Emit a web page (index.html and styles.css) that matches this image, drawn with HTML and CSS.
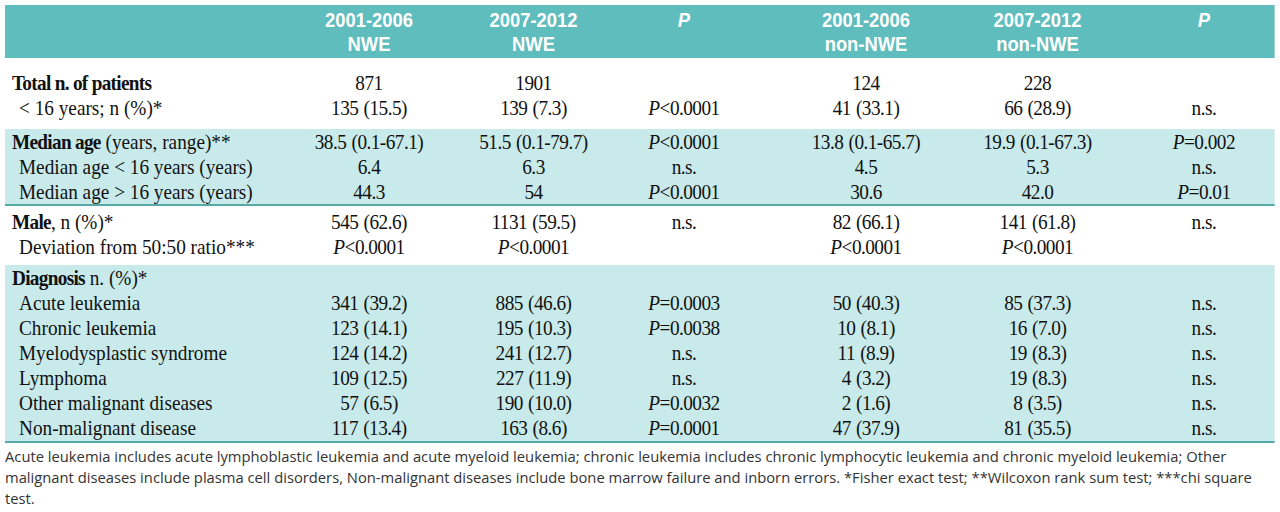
FILE: index.html
```html
<!DOCTYPE html>
<html lang="en">
<head>
<meta charset="utf-8">
<title>Table</title>
<link rel="stylesheet" href="styles.css">
</head>
<body>
<div class="table-wrap">
<table class="data">
  <colgroup>
    <col class="w-label"><col class="w-c1"><col class="w-c2"><col class="w-c3"><col class="w-c4"><col class="w-c5"><col class="w-c6">
  </colgroup>
  <thead>
    <tr>
      <th></th>
      <th>2001-2006<br>NWE</th>
      <th>2007-2012<br>NWE</th>
      <th><i>P</i></th>
      <th>2001-2006<br>non-NWE</th>
      <th>2007-2012<br>non-NWE</th>
      <th><i>P</i></th>
    </tr>
  </thead>
  <tbody class="grp grp-1">
    <tr class="first">
      <td class="lbl"><b>Total n. of patients</b></td>
      <td>871</td><td>1901</td><td></td><td>124</td><td>228</td><td></td>
    </tr>
    <tr class="last">
      <td class="lbl sub">&lt; 16 years; n (%)*</td>
      <td>135 (15.5)</td><td>139 (7.3)</td><td><i>P</i>&lt;0.0001</td><td>41 (33.1)</td><td>66 (28.9)</td><td>n.s.</td>
    </tr>
  </tbody>
  <tbody class="grp grp-2 band">
    <tr>
      <td class="lbl"><b>Median age</b> (years, range)**</td>
      <td>38.5 (0.1-67.1)</td><td>51.5 (0.1-79.7)</td><td><i>P</i>&lt;0.0001</td><td>13.8 (0.1-65.7)</td><td>19.9 (0.1-67.3)</td><td><i>P</i>=0.002</td>
    </tr>
    <tr>
      <td class="lbl sub">Median age &lt; 16 years (years)</td>
      <td>6.4</td><td>6.3</td><td>n.s.</td><td>4.5</td><td>5.3</td><td>n.s.</td>
    </tr>
    <tr>
      <td class="lbl sub">Median age &gt; 16 years (years)</td>
      <td>44.3</td><td>54</td><td><i>P</i>&lt;0.0001</td><td>30.6</td><td>42.0</td><td><i>P</i>=0.01</td>
    </tr>
  </tbody>
  <tbody class="grp grp-3">
    <tr class="first">
      <td class="lbl"><b>Male</b>, n (%)*</td>
      <td>545 (62.6)</td><td>1131 (59.5)</td><td>n.s.</td><td>82 (66.1)</td><td>141 (61.8)</td><td>n.s.</td>
    </tr>
    <tr class="last">
      <td class="lbl sub">Deviation from 50:50 ratio***</td>
      <td><i>P</i>&lt;0.0001</td><td><i>P</i>&lt;0.0001</td><td></td><td><i>P</i>&lt;0.0001</td><td><i>P</i>&lt;0.0001</td><td></td>
    </tr>
  </tbody>
  <tbody class="grp grp-4 band">
    <tr>
      <td class="lbl"><b>Diagnosis</b> n. (%)*</td>
      <td></td><td></td><td></td><td></td><td></td><td></td>
    </tr>
    <tr>
      <td class="lbl sub">Acute leukemia</td>
      <td>341 (39.2)</td><td>885 (46.6)</td><td><i>P</i>=0.0003</td><td>50 (40.3)</td><td>85 (37.3)</td><td>n.s.</td>
    </tr>
    <tr>
      <td class="lbl sub">Chronic leukemia</td>
      <td>123 (14.1)</td><td>195 (10.3)</td><td><i>P</i>=0.0038</td><td>10 (8.1)</td><td>16 (7.0)</td><td>n.s.</td>
    </tr>
    <tr>
      <td class="lbl sub">Myelodysplastic syndrome</td>
      <td>124 (14.2)</td><td>241 (12.7)</td><td>n.s.</td><td>11 (8.9)</td><td>19 (8.3)</td><td>n.s.</td>
    </tr>
    <tr>
      <td class="lbl sub">Lymphoma</td>
      <td>109 (12.5)</td><td>227 (11.9)</td><td>n.s.</td><td>4 (3.2)</td><td>19 (8.3)</td><td>n.s.</td>
    </tr>
    <tr>
      <td class="lbl sub">Other malignant diseases</td>
      <td>57 (6.5)</td><td>190 (10.0)</td><td><i>P</i>=0.0032</td><td>2 (1.6)</td><td>8 (3.5)</td><td>n.s.</td>
    </tr>
    <tr class="last">
      <td class="lbl sub">Non-malignant disease</td>
      <td>117 (13.4)</td><td>163 (8.6)</td><td><i>P</i>=0.0001</td><td>47 (37.9)</td><td>81 (35.5)</td><td>n.s.</td>
    </tr>
  </tbody>
</table>
</div>
<p class="note">
  <span class="note-line">Acute leukemia includes acute lymphoblastic leukemia and acute myeloid leukemia; chronic leukemia includes chronic lymphocytic leukemia and chronic myeloid leukemia; Other</span>
  <span class="note-line">malignant diseases include plasma cell disorders, Non-malignant diseases include bone marrow failure and inborn errors. *Fisher exact test; **Wilcoxon rank sum test; ***chi square</span>
  <span class="note-line">test.</span>
</p>
</body>
</html>
```

FILE: styles.css
```css
html, body {
  background: #ffffff;
}
body {
  margin: 5px;
  color: #111111;
}

.table-wrap {
  width: 1270px;
  height: 439px;
}

.data {
  width: 1451.43px;
  table-layout: fixed;
  border-collapse: collapse;
  transform: scaleX(0.875);
  transform-origin: 0 0;
  font-family: "Liberation Serif", "Times New Roman", serif;
  font-size: 22px;
}

.w-label { width: 328px; }
.w-c1 { width: 176px; }
.w-c2 { width: 200px; }
.w-c3 { width: 144px; }
.w-c4 { width: 240px; }
.w-c5 { width: 184px; }
.w-c6 { width: 179.43px; }

.data thead tr {
  background: #5fbdbd;
}
.data th {
  color: #ffffff;
  font-family: "Liberation Sans", Arial, sans-serif;
  font-weight: bold;
  font-size: 21px;
  line-height: 24px;
  height: 48px;
  padding: 3px 0 2px;
  vertical-align: top;
  text-align: center;
}

.data td {
  padding: 0;
  height: 25px;
  line-height: 25px;
  text-align: center;
  white-space: nowrap;
  vertical-align: top;
  letter-spacing: -0.6px;
  word-spacing: 1px;
}

.data th:nth-child(5),
.data td:nth-child(5) {
  padding-left: 32px;
}
.data th:nth-child(7),
.data td:nth-child(7) {
  padding-left: 17px;
}

.data td.lbl {
  text-align: left;
  padding-left: 8px;
  letter-spacing: 0;
  word-spacing: 0;
}
.data td.lbl.sub {
  padding-left: 16px;
}
.data td.lbl b {
  letter-spacing: -0.8px;
}

.band tr {
  background: #c8eaea;
}
.grp-2 tr:last-child td,
.grp-4 tr:last-child td {
  border-bottom: 2px solid #55a9a6;
}

.grp-1 tr.first td { padding-top: 12px; }
.grp-1 tr.last td { padding-bottom: 9px; }
.grp-3 tr.first td { padding-top: 3px; }
.grp-3 tr.last td { padding-bottom: 6px; }
.grp-4 tr.last td { padding-bottom: 1px; }

.note {
  margin: 2px 0 0;
  font-family: "Open Sans", "Liberation Sans", sans-serif;
  font-size: 14.75px;
  line-height: 21px;
  color: #333333;
}
.note-line {
  display: block;
  white-space: nowrap;
}
```
